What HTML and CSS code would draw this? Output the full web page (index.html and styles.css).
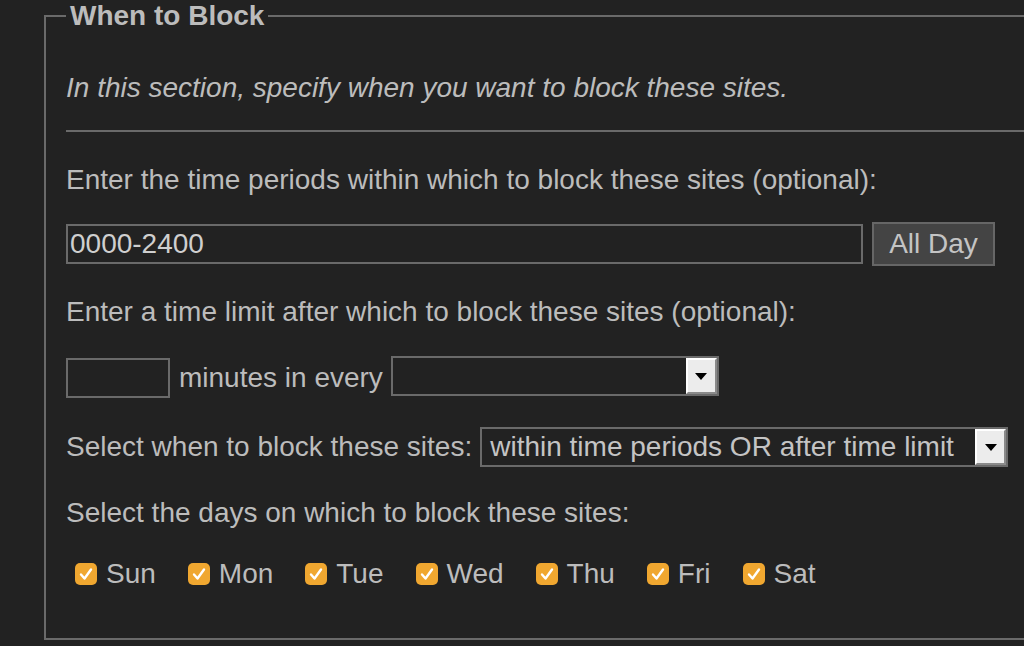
FILE: index.html
```html
<!DOCTYPE html>
<html>
<head>
<meta charset="utf-8">
<link rel="stylesheet" href="styles.css">
</head>
<body>
<fieldset class="block">
  <legend class="legend">When to Block</legend>
  <p class="intro">In this section, specify when you want to block these sites.</p>
  <hr class="rule">
  <p class="label l1">Enter the time periods within which to block these sites (optional):</p>
  <div class="row r1">
    <div class="textbox periods">0000-2400</div>
    <div class="button">All Day</div>
  </div>
  <p class="label l2">Enter a time limit after which to block these sites (optional):</p>
  <div class="row r2">
    <div class="textbox minutes"></div>
    <span class="text">minutes in every</span>
    <div class="select every"><span class="sel-text"></span><span class="arrow"><span class="tri"></span></span></div>
  </div>
  <div class="row r3">
    <span class="text">Select when to block these sites:</span>
    <div class="select mode"><span class="sel-text">within time periods OR after time limit</span><span class="arrow"><span class="tri"></span></span></div>
  </div>
  <p class="label l4">Select the days on which to block these sites:</p>
  <div class="days">
    <label class="day"><span class="cb"><svg viewBox="0 0 22 22" width="22" height="22"><path d="M6 11.5 L9.5 15.5 L16 6.5" fill="none" stroke="#fff" stroke-width="2.4" stroke-linecap="round" stroke-linejoin="round"/></svg></span>Sun</label>
    <label class="day"><span class="cb"><svg viewBox="0 0 22 22" width="22" height="22"><path d="M6 11.5 L9.5 15.5 L16 6.5" fill="none" stroke="#fff" stroke-width="2.4" stroke-linecap="round" stroke-linejoin="round"/></svg></span>Mon</label>
    <label class="day"><span class="cb"><svg viewBox="0 0 22 22" width="22" height="22"><path d="M6 11.5 L9.5 15.5 L16 6.5" fill="none" stroke="#fff" stroke-width="2.4" stroke-linecap="round" stroke-linejoin="round"/></svg></span>Tue</label>
    <label class="day"><span class="cb"><svg viewBox="0 0 22 22" width="22" height="22"><path d="M6 11.5 L9.5 15.5 L16 6.5" fill="none" stroke="#fff" stroke-width="2.4" stroke-linecap="round" stroke-linejoin="round"/></svg></span>Wed</label>
    <label class="day"><span class="cb"><svg viewBox="0 0 22 22" width="22" height="22"><path d="M6 11.5 L9.5 15.5 L16 6.5" fill="none" stroke="#fff" stroke-width="2.4" stroke-linecap="round" stroke-linejoin="round"/></svg></span>Thu</label>
    <label class="day"><span class="cb"><svg viewBox="0 0 22 22" width="22" height="22"><path d="M6 11.5 L9.5 15.5 L16 6.5" fill="none" stroke="#fff" stroke-width="2.4" stroke-linecap="round" stroke-linejoin="round"/></svg></span>Fri</label>
    <label class="day"><span class="cb"><svg viewBox="0 0 22 22" width="22" height="22"><path d="M6 11.5 L9.5 15.5 L16 6.5" fill="none" stroke="#fff" stroke-width="2.4" stroke-linecap="round" stroke-linejoin="round"/></svg></span>Sat</label>
  </div>
</fieldset>
</body>
</html>
```
FILE: styles.css
```css
html {
  overflow: hidden;
  background: #222222;
}
body {
  margin: 0;
  background: #222222;
  font-family: "Liberation Sans", Arial, sans-serif;
  font-size: 28px;
  line-height: 32px;
  color: #bcbcbc;
}
.block {
  margin: 0 0 0 44px;
  width: 1100px;
  box-sizing: border-box;
  border: 2px solid #6a6a6a;
  padding: 0 20px 48px 20px;
  min-width: 0;
}
.legend {
  font-size: 28px;
  line-height: 32px;
  font-weight: bold;
  padding: 0 4px;
  color: #bcbcbc;
}
.intro {
  margin: 40px 0 0 0;
  font-style: italic;
}
.rule {
  margin: 26px 0 0 0;
  border: 0;
  border-top: 2px solid #6a6a6a;
  height: 0;
}
.label {
  margin: 0;
}
.l1 { margin-top: 32px; }
.l2 { margin-top: 30px; }
.l4 { margin-top: 30px; }
.row {
  display: flex;
  align-items: center;
}
.r1 { margin-top: 26px; height: 44px; }
.r2 { margin-top: 28px; height: 42px; align-items: flex-start; }
.r3 { margin-top: 29px; height: 40px; }
.textbox {
  box-sizing: border-box;
  border: 2px solid #6a6a6a;
  background: #222222;
  color: #cfcfcf;
  padding: 0 2px;
  line-height: 36px;
}
.periods {
  width: 797px;
  height: 40px;
}
.button {
  box-sizing: border-box;
  margin-left: 9px;
  width: 123px;
  height: 44px;
  background: #444444;
  border: 2px solid #666666;
  text-align: center;
  line-height: 40px;
  color: #c4c4c4;
}
.minutes {
  width: 104px;
  height: 40px;
  margin-top: 2px;
}
.r2 .text {
  margin-left: 9px;
  line-height: 44px;
}
.select {
  box-sizing: border-box;
  display: flex;
  height: 40px;
  border: 2px solid #6a6a6a;
  background: #222222;
}
.every {
  width: 328px;
  margin-left: 8px;
}
.mode {
  width: 528px;
  margin-left: 8px;
}
.sel-text {
  flex: 1;
  padding-left: 8px;
  line-height: 36px;
  color: #c4c4c4;
  white-space: nowrap;
  overflow: hidden;
}
.arrow {
  box-sizing: border-box;
  width: 31px;
  height: 36px;
  background: #ececec;
  border-top: 2px solid #ffffff;
  border-left: 2px solid #ffffff;
  border-right: 2px solid #8a8a8a;
  border-bottom: 2px solid #8a8a8a;
  display: flex;
  align-items: center;
  justify-content: center;
}
.tri {
  width: 0;
  height: 0;
  border-left: 6px solid transparent;
  border-right: 6px solid transparent;
  border-top: 7px solid #000000;
}
.days {
  margin-top: 29px;
  display: flex;
  gap: 23px;
}
.day {
  display: flex;
  align-items: center;
}
.cb {
  width: 22px;
  height: 22px;
  margin: 0 9px;
  border-radius: 5px;
  background: #f0a730;
  display: inline-flex;
}
```
